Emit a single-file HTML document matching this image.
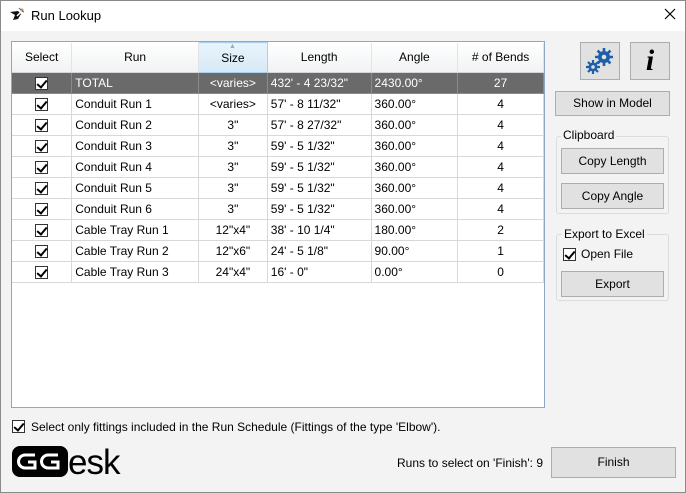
<!DOCTYPE html>
<html><head><style>
*{box-sizing:border-box;margin:0;padding:0}
body{width:686px;height:493px;overflow:hidden;font-family:"Liberation Sans",sans-serif;font-size:12px;color:#000;background:#f3f3f3;position:relative}
.frame{position:absolute;left:0;top:0;width:686px;height:493px;border:1px solid #8a8a8a;pointer-events:none;z-index:5}
.title{position:absolute;left:0;top:0;width:686px;height:31px;background:#fff}
.a{position:absolute}
.grid{position:absolute;left:11px;top:41px;width:534px;height:367px;border:1px solid #8fa8c8;background:#fff}
table{border-collapse:collapse;position:absolute;left:0;top:0}
td,th{font-weight:normal;height:21px;border-right:1px solid #d8d8d8;border-bottom:1px solid #d8d8d8;white-space:nowrap;font-size:12px}
th{height:30px;background:linear-gradient(#fff,#f1f2f4);text-align:center;border-right:1px solid #e3e3e3;border-bottom:1px solid #d5d5d5}
th.s{background:linear-gradient(#e9f4fb,#d6e9f6);border:1px solid #a9d1ef}
tr.tot td{background:#6a6a6a;color:#fff;border-color:#8a8a8a}
.c{text-align:center}.l{padding-left:3px}
.cb{display:inline-block;width:13px;height:13px;border:1px solid #333;background:#fff;position:relative;vertical-align:middle}
.cb:after{content:"";position:absolute;left:3px;top:0px;width:4px;height:8px;border:solid #000;border-width:0 2px 2px 0;transform:rotate(40deg)}
.btn{position:absolute;background:#e1e1e1;border:1px solid #adadad;text-align:center;font-size:12px}
.grp{position:absolute;border:1px solid #dcdcdc;border-radius:3px}
.gl{position:absolute;background:#f3f3f3;padding:0 2px}
</style></head><body>
<div class="frame"></div>
<div class="title">
<svg class="a" style="left:9px;top:7px" width="16" height="16" viewBox="0 0 16 16"><path d="M1 5 L6 8 L4 13 L9 12 L12 7 L9 4 Z" fill="#111"/><path d="M8 9 L11 6" stroke="#fff" stroke-width="1.5"/><circle cx="13" cy="3" r="1.5" fill="#e08a2a"/><path d="M10 1 L12 3 M15 5 L13 4" stroke="#3a6fc4"/></svg>
<div class="a" style="left:31px;top:8px;font-size:13px">Run Lookup</div>
<svg class="a" style="left:664px;top:8px" width="12" height="12" viewBox="0 0 12 12"><path d="M1 1L11 11M11 1L1 11" stroke="#000" stroke-width="1.2"/></svg>
</div>
<div class="grid">
<table>
<tr><th style="width:60px">Select</th><th style="width:127px">Run</th><th class="s" style="width:69px;position:relative"><span class="a" style="left:30px;top:0px;font-size:7px;color:#9ab">▲</span>Size</th><th style="width:104px">Length</th><th style="width:87px">Angle</th><th style="width:86px">#&nbsp;of Bends</th></tr>
<tr class="tot"><td class="c"><span class="cb"></span></td><td class="l">TOTAL</td><td class="c">&lt;varies&gt;</td><td class="l">432' - 4 23/32"</td><td class="l">2430.00°</td><td class="c">27</td></tr>
<tr><td class="c"><span class="cb"></span></td><td class="l">Conduit Run 1</td><td class="c">&lt;varies&gt;</td><td class="l">57' - 8 11/32"</td><td class="l">360.00°</td><td class="c">4</td></tr>
<tr><td class="c"><span class="cb"></span></td><td class="l">Conduit Run 2</td><td class="c">3"</td><td class="l">57' - 8 27/32"</td><td class="l">360.00°</td><td class="c">4</td></tr>
<tr><td class="c"><span class="cb"></span></td><td class="l">Conduit Run 3</td><td class="c">3"</td><td class="l">59' - 5 1/32"</td><td class="l">360.00°</td><td class="c">4</td></tr>
<tr><td class="c"><span class="cb"></span></td><td class="l">Conduit Run 4</td><td class="c">3"</td><td class="l">59' - 5 1/32"</td><td class="l">360.00°</td><td class="c">4</td></tr>
<tr><td class="c"><span class="cb"></span></td><td class="l">Conduit Run 5</td><td class="c">3"</td><td class="l">59' - 5 1/32"</td><td class="l">360.00°</td><td class="c">4</td></tr>
<tr><td class="c"><span class="cb"></span></td><td class="l">Conduit Run 6</td><td class="c">3"</td><td class="l">59' - 5 1/32"</td><td class="l">360.00°</td><td class="c">4</td></tr>
<tr><td class="c"><span class="cb"></span></td><td class="l">Cable Tray Run 1</td><td class="c">12"x4"</td><td class="l">38' - 10 1/4"</td><td class="l">180.00°</td><td class="c">2</td></tr>
<tr><td class="c"><span class="cb"></span></td><td class="l">Cable Tray Run 2</td><td class="c">12"x6"</td><td class="l">24' - 5 1/8"</td><td class="l">90.00°</td><td class="c">1</td></tr>
<tr><td class="c"><span class="cb"></span></td><td class="l">Cable Tray Run 3</td><td class="c">24"x4"</td><td class="l">16' - 0"</td><td class="l">0.00°</td><td class="c">0</td></tr>
</table>
</div>
<div class="btn" style="left:580px;top:42px;width:40px;height:38px">
<svg width="38" height="36" viewBox="0 0 38 36"><g fill="#1f5fa8"><circle cx="23" cy="14" r="6"/><circle cx="12" cy="24" r="4.5"/></g>
<g stroke="#1f5fa8"><path d="M23 5v18M14 14h18M16.6 7.6l12.8 12.8M29.4 7.6l-12.8 12.8" stroke-width="2.6"/><path d="M12 17v14M5 24h14M7 19l10 10M17 19l-10 10" stroke-width="2.2"/></g>
<circle cx="23" cy="14" r="2.3" fill="#e1e1e1"/><circle cx="12" cy="24" r="1.8" fill="#e1e1e1"/></svg></div>
<div class="btn" style="left:630px;top:42px;width:40px;height:38px;font:bold italic 30px 'Liberation Serif',serif;line-height:36px">i</div>
<div class="btn" style="left:555px;top:91px;width:115px;height:25px;line-height:23px">Show in Model</div>
<div class="grp" style="left:556px;top:136px;width:113px;height:78px"></div>
<div class="gl" style="left:561px;top:128px">Clipboard</div>
<div class="btn" style="left:561px;top:148px;width:103px;height:26px;line-height:24px">Copy Length</div>
<div class="btn" style="left:561px;top:183px;width:103px;height:26px;line-height:24px">Copy Angle</div>
<div class="grp" style="left:556px;top:234px;width:113px;height:67px"></div>
<div class="gl" style="left:562px;top:227px">Export to Excel</div>
<div class="a" style="left:563px;top:247px"><span class="cb"></span></div>
<div class="a" style="left:581px;top:247px">Open File</div>
<div class="btn" style="left:561px;top:271px;width:103px;height:26px;line-height:24px">Export</div>
<div class="a" style="left:12px;top:419px"><span class="cb"></span></div>
<div class="a" style="left:31px;top:420px">Select only fittings included in the Run Schedule (Fittings of the type 'Elbow').</div>
<svg class="a" style="left:11px;top:446px" width="115" height="32" viewBox="0 0 115 32"><rect x="1" y="0" width="56" height="31" rx="8" fill="#000"/><path d="M24 9H14a6.5 6.5 0 0 0 0 13h10v-6h-7M47 9H37a6.5 6.5 0 0 0 0 13h10v-6h-7" stroke="#fff" stroke-width="3" fill="none"/><text x="57" y="28" font-family="Liberation Sans" font-size="35" letter-spacing="-1">esk</text></svg>
<div class="a" style="left:397px;top:456px">Runs to select on 'Finish': 9</div>
<div class="btn" style="left:551px;top:447px;width:125px;height:31px;line-height:29px">Finish</div>
</body></html>
